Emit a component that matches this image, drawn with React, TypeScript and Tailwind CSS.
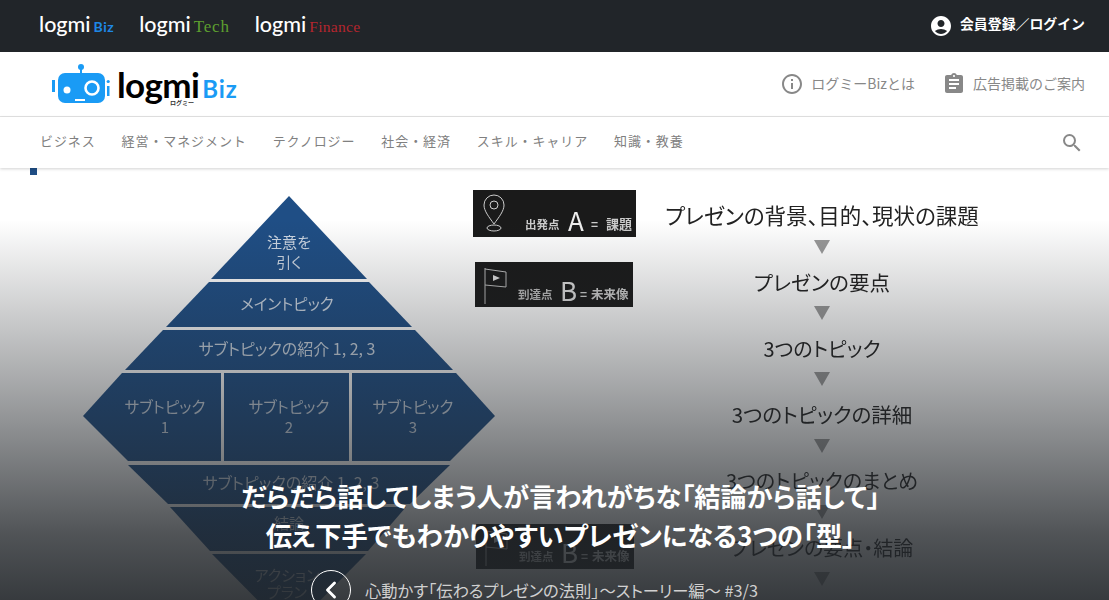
import { ChevronLeft } from 'lucide-react'
import { MdAccountCircle, MdAssignment, MdInfoOutline, MdSearch } from 'react-icons/md'

const navItems = ['ビジネス', '経営・マネジメント', 'テクノロジー', '社会・経済', 'スキル・キャリア', '知識・教養']

const flowSteps = [
  { label: 'プレゼンの背景、目的、現状の課題', y: 224, size: 21.5 },
  { label: 'プレゼンの要点', y: 291, size: 20.5 },
  { label: '3つのトピック', y: 357, size: 20 },
  { label: '3つのトピックの詳細', y: 423, size: 20.5 },
  { label: '3つのトピックのまとめ', y: 489, size: 20 },
  { label: 'プレゼンの要点・結論', y: 556, size: 20 },
]

const flowArrows = [240, 306, 372, 439, 505, 572]

function SiteLogo({ name, nameClass }: { name: string; nameClass: string }) {
  return (
    <div className="flex items-baseline gap-[3px]">
      <span className="font-['Lato',sans-serif] text-[21.5px] leading-none font-medium text-white">logmi</span>
      <span className={nameClass}>{name}</span>
    </div>
  )
}

function RobotLogo() {
  return (
    <svg width="60" height="40" viewBox="0 0 60 40" className="shrink-0">
      <circle cx="29" cy="3" r="3" fill="#1a9bf5" />
      <rect x="28" y="3" width="2" height="6" fill="#1a9bf5" />
      <rect x="0" y="16" width="3" height="12" fill="#1a9bf5" />
      <rect x="6" y="9" width="47" height="30" rx="7" fill="#1a9bf5" />
      <circle cx="15" cy="26" r="3.5" fill="#fff" />
      <circle cx="40" cy="24" r="6.5" fill="#1a9bf5" stroke="#fff" strokeWidth="2.6" />
      <rect x="23" y="35" width="10" height="2" fill="#fff" />
      <rect x="55" y="22" width="2.5" height="10" fill="#1a9bf5" />
      <circle cx="56.2" cy="17.5" r="1.6" fill="#1a9bf5" />
    </svg>
  )
}

function SlideBox({ x, y, w, h, children }: { x: number; y: number; w: number; h: number; children: React.ReactNode }) {
  return (
    <g transform={`translate(${x} ${y})`}>
      <rect width={w} height={h} fill="#1a1a1a" />
      {children}
    </g>
  )
}

function FlagBoxContent() {
  return (
    <>
      <path d="M10 42V6M10 7l21 3v15l-21-2" fill="none" stroke="#bbb" strokeWidth="1" />
      <path d="M18 13l7 3-7 3z" fill="#ddd" />
      <text x="43" y="37" fontSize="11.5" fontWeight="700" fill="#bbb">到達点</text>
      <text x="85" y="39" fontSize="26" fill="#ddd">B</text>
      <text x="105" y="37" fontSize="12" fontWeight="700" fill="#ccc">=</text>
      <text x="116" y="37" fontSize="12.5" fontWeight="700" fill="#ccc">未来像</text>
    </>
  )
}

function Slide() {
  return (
    <svg
      width="1109"
      height="432"
      viewBox="0 168 1109 432"
      className="absolute inset-0 font-['Noto_Sans_CJK_JP',sans-serif] [filter:blur(0.4px)] [font-feature-settings:'palt']"
    >
      <rect x="30" y="168" width="7" height="7" fill="#1f4e85" />

      {/* Pyramid */}
      <g fill="#1f4e85">
        <polygon points="289,196 367,279 211,279" />
        <polygon points="209,282 369,282 412,327 166,327" />
        <polygon points="163,330 415,330 453,370 125,370" />
        <polygon points="122,373 221,373 221,461 128,461 83,416" />
        <rect x="224" y="373" width="125" height="88" />
        <polygon points="352,373 456,373 495,416 450,461 352,461" />
        <polygon points="128,465 450,465 410,504 168,504" />
        <polygon points="170,507 406,507 368,551 210,551" />
        <polygon points="212,554 366,554 289,632" />
      </g>
      <g fill="#cdd7e3" fontSize="15" textAnchor="middle">
        <text x="289" y="248">注意を</text>
        <text x="289" y="268">引く</text>
        <text x="287" y="310" fontSize="15.5">メイントピック</text>
        <text x="287" y="355" fontSize="16">サブトピックの紹介 1, 2, 3</text>
        <text x="165" y="413" fontSize="15.5">サブトピック</text>
        <text x="165" y="433">1</text>
        <text x="289" y="413" fontSize="15.5">サブトピック</text>
        <text x="289" y="433">2</text>
        <text x="413" y="413" fontSize="15.5">サブトピック</text>
        <text x="413" y="433">3</text>
        <text x="291" y="489" fontSize="16">サブトピックの紹介 1, 2, 3</text>
        <text x="289" y="529">結論</text>
        <text x="287" y="581">アクション</text>
        <text x="287" y="598">プラン</text>
      </g>

      {/* Start and goal boxes */}
      <SlideBox x={473} y={190} w={163} h={47}>
        <circle cx="21" cy="15" r="4" fill="none" stroke="#ccc" strokeWidth="1" />
        <path d="M21 34c-5-7-10-13-10-19a10 10 0 0 1 20 0c0 6-5 12-10 19z" fill="none" stroke="#ccc" strokeWidth="1" />
        <ellipse cx="21" cy="38" rx="7" ry="3" fill="none" stroke="#ccc" strokeWidth="1" />
        <text x="52" y="39" fontSize="11.5" fontWeight="700" fill="#ccc">出発点</text>
        <text x="95" y="41" fontSize="26" fill="#eee">A</text>
        <text x="118" y="39" fontSize="12" fontWeight="700" fill="#ccc">=</text>
        <text x="133" y="39" fontSize="13" fontWeight="700" fill="#ccc">課題</text>
      </SlideBox>
      <SlideBox x={475} y={262} w={158} h={45}>
        <FlagBoxContent />
      </SlideBox>
      <SlideBox x={476} y={524} w={158} h={45}>
        <FlagBoxContent />
      </SlideBox>

      {/* Flow steps */}
      <g fill="#222" textAnchor="middle">
        {flowSteps.map((step) => (
          <text key={step.label} x="822" y={step.y} fontSize={step.size}>
            {step.label}
          </text>
        ))}
      </g>
      <g fill="#999">
        {flowArrows.map((y) => (
          <polygon key={y} points={`814,${y} 830,${y} 822,${y + 14}`} />
        ))}
      </g>
    </svg>
  )
}

export default function App() {
  return (
    <div className="flex h-[600px] w-[1109px] flex-col overflow-hidden bg-white font-['Noto_Sans_CJK_JP',sans-serif]">
      {/* Network bar */}
      <div className="flex h-[52px] shrink-0 items-center justify-between bg-[#212529] pr-6 pl-[39px]">
        <div className="flex items-center gap-[25px] pb-[2px]">
          <SiteLogo name="Biz" nameClass="font-['Lato',sans-serif] text-[14px] font-bold tracking-[0.5px] leading-none text-[#1e88e5]" />
          <SiteLogo name="Tech" nameClass="font-['Liberation_Serif',serif] text-[17px] leading-none tracking-[0.8px] text-[#5d9e2f]" />
          <SiteLogo name="Finance" nameClass="font-['Liberation_Serif',serif] text-[15.5px] leading-none tracking-[0.3px] text-[#b5262e]" />
        </div>
        <div className="flex items-center gap-[7px] text-white">
          <MdAccountCircle className="mb-[1px] h-6 w-6" />
          <span className="pb-[5px] text-[13.9px] leading-none font-bold">会員登録／ログイン</span>
        </div>
      </div>

      {/* Brand row */}
      <div className="flex h-[65px] shrink-0 items-center justify-between border-b border-[#e4e4e4] pr-6 pl-[52px]">
        <div className="flex items-center gap-[5px]">
          <RobotLogo />
          <div className="relative flex items-baseline gap-[3px]">
            <span className="font-['Lato',sans-serif] text-[35px] leading-none font-bold tracking-[-0.6px] text-black">logmi</span>
            <span className="font-['Lato',sans-serif] text-[24px] leading-none font-bold tracking-[0.9px] text-[#1a9bf5]">Biz</span>
            <span className="absolute top-[33px] left-[53px] text-[6px] leading-none font-bold text-[#333]">ログミー</span>
          </div>
        </div>
        <div className="flex items-center gap-[27px] text-[14px] leading-none text-[#888]">
          <div className="flex items-center gap-[7px]">
            <MdInfoOutline className="h-6 w-6" />
            <span className="pb-[2px]">ログミーBizとは</span>
          </div>
          <div className="flex items-center gap-[7px]">
            <MdAssignment className="h-6 w-6" />
            <span className="pb-[2px]">広告掲載のご案内</span>
          </div>
        </div>
      </div>

      {/* Category nav */}
      <div className="relative z-10 flex h-[51px] shrink-0 items-center justify-between pr-[25px] pl-10 shadow-[0_1px_3px_rgba(0,0,0,0.18)]">
        <div className="flex items-center gap-[26px] pb-[4px]">
          {navItems.map((item) => (
            <span key={item} className="text-[13px] leading-none tracking-[0.9px] text-[#808080]">
              {item}
            </span>
          ))}
        </div>
        <MdSearch className="h-6 w-6 text-[#888]" />
      </div>

      {/* Hero */}
      <div className="relative flex-1 overflow-hidden bg-white">
        <Slide />
        <div className="absolute inset-0 bg-[linear-gradient(to_bottom,rgba(33,37,41,0)_12%,rgba(33,37,41,0.4)_50%,rgba(33,37,41,0.79)_85%,rgba(33,37,41,0.9)_100%)]" />
        <div className="absolute inset-x-0 bottom-0 flex flex-col items-center [font-feature-settings:'palt']">
          <h1 className="mr-[-12px] text-center text-[26.2px] leading-[39px] font-bold text-white">
            だらだら話してしまう人が言われがちな「結論から話して」
            <br />
            伝え下手でもわかりやすいプレゼンになる3つの「型」
          </h1>
          <div className="mt-[15px] mb-[-10px] flex items-center gap-[14px] self-start pl-[311px]">
            <div className="flex h-10 w-10 items-center justify-center rounded-full border border-white">
              <ChevronLeft className="h-7 w-7 text-white" strokeWidth={2.5} />
            </div>
            <span className="text-[16.3px] leading-none text-[#d0d0d0]">心動かす「伝わるプレゼンの法則」〜ストーリー編〜 #3/3</span>
          </div>
        </div>
      </div>
    </div>
  )
}
